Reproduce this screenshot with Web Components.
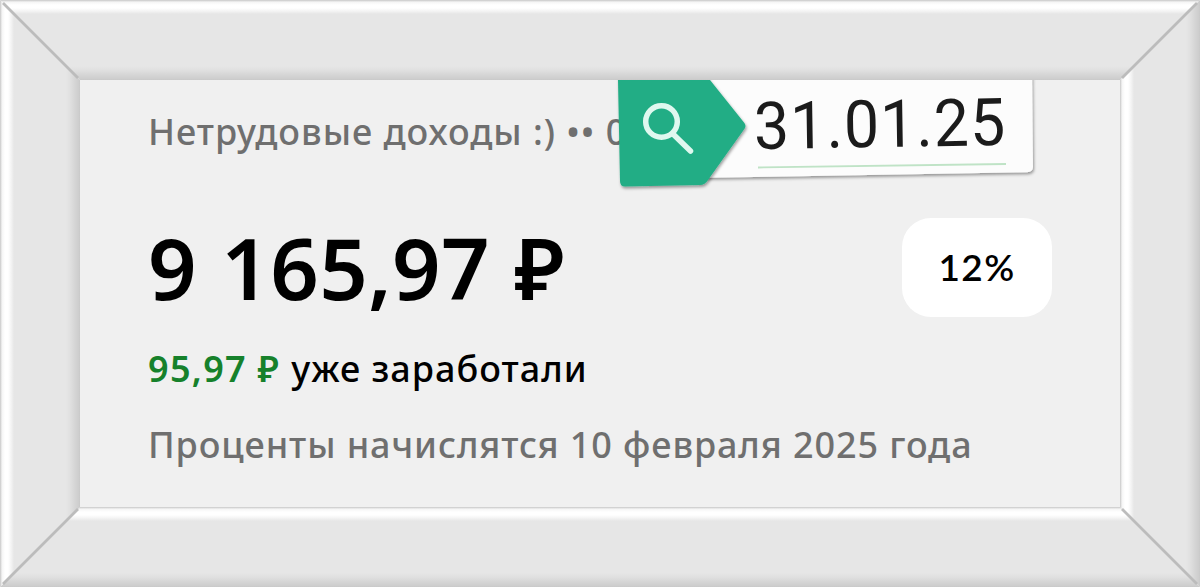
<!DOCTYPE html>
<html lang="ru">
<head>
<meta charset="utf-8">
<title>Вклад</title>
<style>
  html, body { margin: 0; }
  body { width: 1200px; height: 587px; overflow: hidden; background: #f0f0f0; }
</style>
</head>
<body>
<picture-frame>
  <deposit-card>
    <span slot="name">Нетрудовые доходы :) •• 0</span>
    <span slot="amount">9 165,97 ₽</span>
    <rate-badge slot="rate">12%</rate-badge>
    <span slot="earned">95,97 ₽</span>
    <span slot="note">уже заработали</span>
    <span slot="payout">Проценты начислятся 10 февраля 2025 года</span>
  </deposit-card>
  <date-tag slot="sticker">31.01.25</date-tag>
</picture-frame>

<script>
class PictureFrame extends HTMLElement {
  constructor() {
    super();
    this.attachShadow({ mode: 'open' });
  }

  connectedCallback() {
    this.shadowRoot.innerHTML = `
      <style>
        :host {
          display: grid;
          width: 1200px;
          height: 587px;
          grid-template: 80px 427px 80px / 80px 1040px 80px;
          --bevel: #c8c8c8 0, #dcdcdc 1px, #f5f5f5 2px, #ffffff 5px, #ffffff 8px, #f4f4f4 11px, #e6e6e6 14px,
            #e6e6e6 66px, #e0e0e0 70px, #d5d5d5 75px, #cdcdcd 79px, #c8c8c8 80px;
        }

        .side { pointer-events: none; }

        .top {
          grid-area: 1 / 1 / 2 / 4;
          background: linear-gradient(to bottom, var(--bevel));
          clip-path: polygon(0 0, 100% 0, calc(100% - 80px) 100%, 80px 100%);
        }

        .bottom {
          grid-area: 3 / 1 / 4 / 4;
          background: linear-gradient(to bottom, var(--bevel));
          clip-path: polygon(80px 0, calc(100% - 80px) 0, 100% 100%, 0 100%);
        }

        .left {
          grid-area: 1 / 1 / 4 / 2;
          background: linear-gradient(to right, var(--bevel));
          clip-path: polygon(0 0, 100% 80px, 100% calc(100% - 80px), 0 100%);
        }

        .right {
          grid-area: 1 / 3 / 4 / 4;
          background: linear-gradient(to right, var(--bevel));
          clip-path: polygon(0 80px, 100% 0, 100% 100%, 0 calc(100% - 80px));
        }

        /* clipped sides paint above plain items, so the joints need a layer */
        .joints {
          grid-area: 1 / 1 / 4 / 4;
          z-index: 1;
          pointer-events: none;
        }

        .window {
          grid-area: 2 / 2 / 3 / 3;
          position: relative;
          overflow: hidden;
          background: #f0f0f0;
        }
      </style>

      <div class="side top"></div>
      <div class="side bottom"></div>
      <div class="side left"></div>
      <div class="side right"></div>
      <svg class="joints" width="1200" height="587" fill="none" stroke="#bcbcbc" stroke-width="2.8">
        <path d="M3 3 78 78M1197 3 1122 78M3 584 78 509M1197 584 1122 509"/>
      </svg>
      <div class="window">
        <slot></slot>
        <slot name="sticker"></slot>
      </div>
    `;
  }
}

class DepositCard extends HTMLElement {
  constructor() {
    super();
    this.attachShadow({ mode: 'open' });
  }

  connectedCallback() {
    this.shadowRoot.innerHTML = `
      <style>
        :host {
          display: flex;
          flex-direction: column;
          padding: 27px 68px 0;
          font: 500 36px/50px "Noto Sans", sans-serif;
          color: #6f6f6f;
          white-space: nowrap;
        }

        .name { letter-spacing: 0.98px; }

        .balance {
          display: flex;
          align-items: center;
          justify-content: space-between;
          height: 100px;
          margin-top: 60px;
        }

        .amount {
          font-size: 85px;
          font-weight: 600;
          line-height: 100px;
          letter-spacing: 0.3px;
          word-spacing: 2px;
          color: #000;
        }

        .earned {
          display: flex;
          gap: 11px;
          margin-top: 27px;
          color: #000;
          letter-spacing: 1px;
        }

        .earned b {
          font-weight: 600;
          letter-spacing: 1.3px;
          color: #16812b;
        }

        .payout {
          margin-top: 26px;
          letter-spacing: 0.9px;
        }
      </style>

      <div class="name"><slot name="name"></slot></div>
      <div class="balance">
        <div class="amount"><slot name="amount"></slot></div>
        <slot name="rate"></slot>
      </div>
      <div class="earned">
        <b><slot name="earned"></slot></b>
        <slot name="note"></slot>
      </div>
      <div class="payout"><slot name="payout"></slot></div>
    `;
  }
}

class RateBadge extends HTMLElement {
  constructor() {
    super();
    this.attachShadow({ mode: 'open' });
  }

  connectedCallback() {
    this.shadowRoot.innerHTML = `
      <style>
        :host {
          display: flex;
          align-items: center;
          justify-content: center;
          width: 150px;
          height: 99px;
          border-radius: 29px;
          background: #fff;
          color: #000;
          font: 600 37px/50px Lato, sans-serif;
          letter-spacing: 1.4px;
        }
      </style>
      <slot></slot>
    `;
  }
}

class DateTag extends HTMLElement {
  constructor() {
    super();
    this.attachShadow({ mode: 'open' });
  }

  // The tag is stuck over the card, tilted, with its top edge under the frame
  connectedCallback() {
    this.shadowRoot.innerHTML = `
      <style>
        :host {
          position: absolute;
          left: 530px;
          top: 0;
          width: 430px;
          height: 115px;
        }

        svg {
          position: absolute;
          left: 0;
          top: 0;
        }

        .date {
          position: absolute;
          left: 144px;
          top: 7px;
          font: 400 66px/80px Roboto, sans-serif;
          letter-spacing: 1px;
          color: #1b1b1b;
          transform: rotate(-0.9deg) scaleX(0.95);
          transform-origin: left center;
          white-space: nowrap;
        }
      </style>

      <svg width="430" height="115" viewBox="610 80 430 115">
        <defs>
          <filter id="shade" x="-5%" y="-10%" width="110%" height="125%">
            <feDropShadow dx="1" dy="2" stdDeviation="1.5" flood-opacity="0.38"/>
          </filter>
        </defs>
        <path filter="url(#shade)" fill="#fcfcfc" d="M690 70H1032L1033 167Q1033 172 1027 172.300L690 178Z"/>
        <path filter="url(#shade)" fill="#23ad85" d="M618 70H702L710 80 744 122.500Q747 126 744 129.500L708 180Q705 185 700 185L625 186.500Q620 186.500 620 181L618 80Z"/>
        <path stroke="#bfe3c6" stroke-width="1.800" d="M758 167.500 1006 164"/>
        <g fill="none" stroke="#dff8ef" stroke-linecap="round">
          <circle cx="661.500" cy="121.500" r="15.800" stroke-width="5.500"/>
          <path stroke-width="5.500" d="M673.500 134.500 690.500 151"/>
        </g>
      </svg>
      <div class="date"><slot></slot></div>
    `;
  }
}

customElements.define('picture-frame', PictureFrame);
customElements.define('deposit-card', DepositCard);
customElements.define('rate-badge', RateBadge);
customElements.define('date-tag', DateTag);
</script>
</body>
</html>
